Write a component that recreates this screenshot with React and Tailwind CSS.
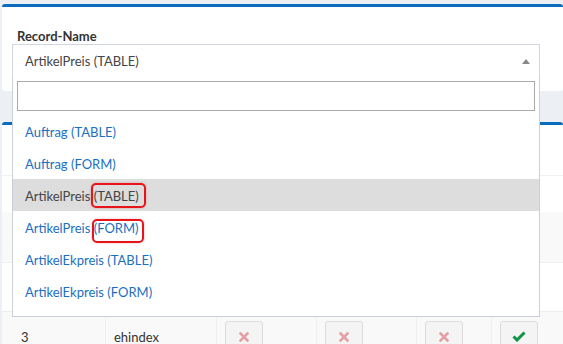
import React from 'react';

const options = [
  { label: 'Auftrag (TABLE)' },
  { label: 'Auftrag (FORM)' },
  { label: 'ArtikelPreis (TABLE)', active: true },
  { label: 'ArtikelPreis (FORM)' },
  { label: 'ArtikelEkpreis (TABLE)' },
  { label: 'ArtikelEkpreis (FORM)' },
];

const XIcon = () => (
  <svg width="10" height="10" viewBox="0 0 10 10">
    <path d="M1.5 1.5 L8.5 8.5 M8.5 1.5 L1.5 8.5" stroke="#e3a1a4" strokeWidth="2.6" strokeLinecap="square" />
  </svg>
);

const CheckIcon = () => (
  <svg width="14" height="11" viewBox="0 0 14 11">
    <path d="M1.5 5.5 L5 9 L12.5 1.5" fill="none" stroke="#0b9444" strokeWidth="3" />
  </svg>
);

const Btn = ({ children }) => (
  <div className="w-[38px] h-[32px] bg-[#f4f4f4] border border-[#dddddd] rounded-[3px] flex items-center justify-center">
    {children}
  </div>
);

export default function App() {
  return (
    <div
      className="relative w-[563px] h-[344px] overflow-hidden bg-[#ecf0f5] text-[13px] text-[#333]"
      style={{ fontFamily: 'Lato, "Noto Sans", sans-serif' }}
    >
      {/* form card */}
      <div className="ml-[2px] mt-[4px] h-[87px] bg-white border-t-[3px] border-[#0a6cbc] rounded-[3px] px-[10px]">
        <div className="pl-[5px] pt-[21px] h-[37px] font-bold text-[13px] leading-[16px] text-[#333]">Record-Name</div>
        <div className="w-[528px] h-[34px] border border-[#d2d6de] flex items-center justify-between pl-[12px] pr-[9px] pt-[2px] text-[#444]">
          <span>ArtikelPreis (TABLE)</span>
          <span className="w-0 h-0 mb-[2px] border-l-[4px] border-r-[4px] border-b-[5px] border-l-transparent border-r-transparent border-b-[#888]" />
        </div>
      </div>

      {/* table card */}
      <div className="ml-[2px] mt-[31px] bg-white border-t-[3px] border-[#0a6cbc] rounded-[3px]">
        <div className="h-[51px] border-b border-[#f0f0f0]" />
        <div className="h-[36px]" />
        <div className="h-[50px] bg-[#f9f9f9]" />
        <div className="h-[49px] border-t border-[#f0f0f0]" />
        <div className="h-[50px] bg-[#f9f9f9] border-t border-[#eeeeee] flex pl-[11px]">
          <div className="w-[92px] pl-[8px] pt-[2px] flex items-center">3</div>
          <div className="w-[111px] pl-[8px] pt-[2px] flex items-center border-l border-[#f0f0f0]">ehindex</div>
          <div className="w-[100px] pl-[8px] flex items-center border-l border-[#f0f0f0]"><Btn><XIcon /></Btn></div>
          <div className="w-[100px] pl-[8px] flex items-center border-l border-[#f0f0f0]"><Btn><XIcon /></Btn></div>
          <div className="w-[75px] pl-[8px] flex items-center border-l border-[#f0f0f0]"><Btn><XIcon /></Btn></div>
          <div className="flex-1 pl-[8px] flex items-center border-l border-[#f0f0f0]"><Btn><CheckIcon /></Btn></div>
        </div>
      </div>

      {/* open dropdown */}
      <div className="absolute left-[12px] top-[77px] w-[528px] h-[240px] bg-white border border-t-0 border-[#c9d0da]">
        <div className="p-[4px]">
          <div className="h-[30px] border border-[#aaaaaa]" />
        </div>
        <ul>
          {options.map((o) => (
            <li
              key={o.label}
              className={
                'h-[32px] flex items-center pl-[12px] pt-[3px] ' +
                (o.active ? 'bg-[#dddddd] text-[#444]' : 'text-[#1a6fc1]')
              }
            >
              {o.label}
            </li>
          ))}
        </ul>
      </div>

      {/* annotation marks */}
      <div className="absolute left-[91px] top-[183px] w-[55px] h-[25px] border-2 border-[#e8141c] rounded-[5px] shadow-[0_0_2px_rgba(232,20,28,0.4)]" />
      <div className="absolute left-[92px] top-[219px] w-[52px] h-[24px] border-2 border-[#e8141c] rounded-[5px] shadow-[0_0_2px_rgba(232,20,28,0.4)]" />
    </div>
  );
}
